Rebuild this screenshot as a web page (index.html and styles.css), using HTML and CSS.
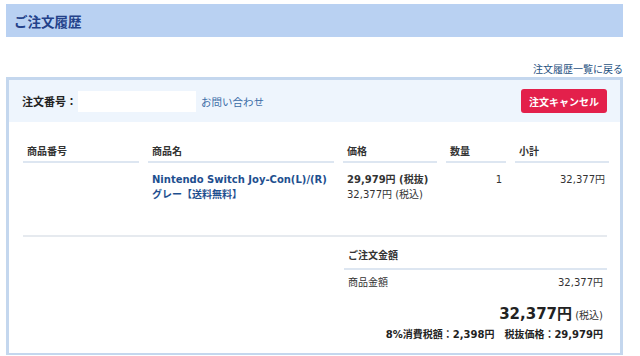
FILE: index.html
```html
<!DOCTYPE html>
<html lang="ja">
<head>
  <meta charset="UTF-8">
  <title>ご注文履歴</title>
  <link rel="stylesheet" href="styles.css">
</head>
<body>

  <div class="page-head">
    <h1>ご注文履歴</h1>
  </div>

  <div class="back"><a href="#">注文履歴一覧に戻る</a></div>

  <div class="order">
    <div class="order-top">
      <span class="order-no">注文番号：</span>
      <span class="order-input"></span>
      <a class="contact" href="#">お問い合わせ</a>
      <button class="cancel">注文キャンセル</button>
    </div>

    <div class="order-body">
      <div class="items">
        <div class="th">商品番号</div>
        <div class="th">商品名</div>
        <div class="th">価格</div>
        <div class="th">数量</div>
        <div class="th">小計</div>

        <div class="td"></div>
        <div class="td"><a class="name" href="#">Nintendo Switch Joy-Con(L)/(R)<br>グレー【送料無料】</a></div>
        <div class="td"><b>29,979円 (税抜)</b><br>32,377円 (税込)</div>
        <div class="td num">1</div>
        <div class="td num">32,377円</div>
      </div>

      <div class="summary">
        <div class="sum-title">ご注文金額</div>
        <div class="sum-row">
          <span>商品金額</span>
          <span>32,377円</span>
        </div>
        <div class="total"><b>32,377円</b> (税込)</div>
        <div class="tax">8%消費税額：2,398円　税抜価格：29,979円</div>
      </div>
    </div>
  </div>

</body>
</html>
```

FILE: styles.css
```css
body {
  margin: 0;
  padding: 4px 17px 0 6px;
  background: #fff;
  font-family: "DejaVu Sans", "Noto Sans CJK JP", sans-serif;
  font-size: 10px;
  color: #333;
}

a {
  text-decoration: none;
}

.page-head {
  height: 33px;
  background: #b9d1f2;
  display: flex;
  align-items: center;
  padding-left: 8px;
}

.page-head h1 {
  margin: 0;
  font-size: 13.5px;
  color: #23418a;
}

.back {
  text-align: right;
  margin-top: 25px;
  line-height: 15px;
  font-size: 10px;
}

.back a {
  color: #1f5282;
}

.order {
  border: 3px solid #c4d7ee;
  border-bottom-width: 2px;
  height: 273px;
}

.order-top {
  background: #eef5fd;
  height: 42px;
  display: flex;
  align-items: center;
  padding: 0 13px;
  white-space: nowrap;
}

.order-no {
  font-weight: bold;
  font-size: 11px;
  color: #222;
  width: 56px;
}

.order-input {
  width: 118px;
  height: 21px;
  background: #fff;
}

.contact {
  margin-left: 5px;
  font-size: 10.5px;
  color: #3a6ca6;
}

.cancel {
  margin-left: auto;
  width: 86px;
  height: 24px;
  border: 0;
  border-radius: 3px;
  background: #e3204b;
  color: #fff;
  font-family: inherit;
  font-size: 10px;
  font-weight: bold;
  padding: 0;
}

.order-body {
  padding: 22px 13px 0 14px;
}

.items {
  display: grid;
  grid-template-columns: 116px 186px 94px 60px 94px;
  column-gap: 9px;
  border-bottom: 2px solid #e6eaef;
  white-space: nowrap;
}

.th {
  font-weight: bold;
  line-height: 15px;
  padding: 0 4px 2px;
  border-bottom: 2px solid #dde6f1;
  color: #333;
}

.td {
  padding: 9px 4px 0;
  line-height: 15px;
  height: 63px;
}

.num {
  text-align: right;
}

.name {
  color: #1e4f8f;
  font-weight: bold;
}

.summary {
  margin-left: 321px;
  padding-top: 11px;
}

.sum-title {
  font-weight: bold;
  padding: 0 4px 5px;
  line-height: 15px;
  border-bottom: 2px solid #dde6f1;
}

.sum-row {
  display: flex;
  justify-content: space-between;
  padding: 5px 4px 0;
  line-height: 15px;
}

.total {
  text-align: right;
  padding: 13px 4px 0;
  line-height: 22px;
}

.total b {
  font-size: 15px;
  color: #222;
}

.tax {
  text-align: right;
  font-weight: bold;
  padding: 0 4px;
  line-height: 15px;
  color: #222;
}
```
